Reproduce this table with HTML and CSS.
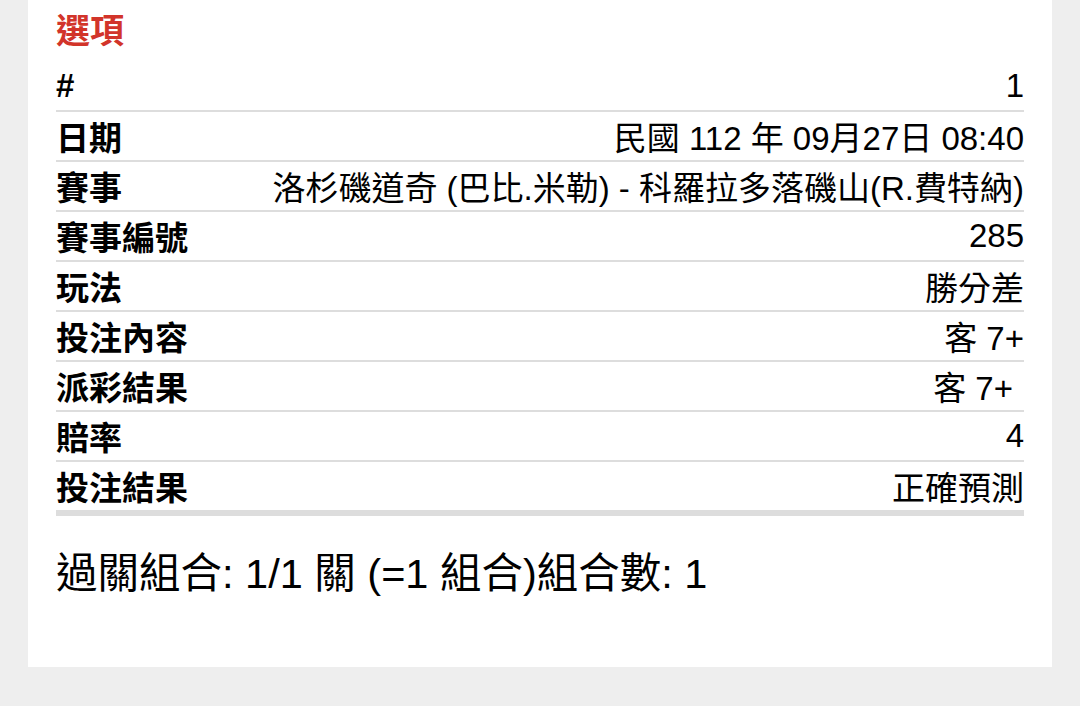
FILE: index.html
```html
<!DOCTYPE html>
<html lang="zh-Hant">
<head>
<meta charset="utf-8">
<link rel="stylesheet" href="styles.css">
</head>
<body>
<div class="card">
  <h2 class="title">選項</h2>
  <div class="list">
    <div class="row"><span class="label">#</span><span class="value">1</span></div>
    <div class="row"><span class="label">日期</span><span class="value">民國 112 年 09月27日 08:40</span></div>
    <div class="row"><span class="label">賽事</span><span class="value">洛杉磯道奇 (巴比.米勒) - 科羅拉多落磯山(R.費特納)</span></div>
    <div class="row"><span class="label">賽事編號</span><span class="value">285</span></div>
    <div class="row"><span class="label">玩法</span><span class="value">勝分差</span></div>
    <div class="row"><span class="label">投注內容</span><span class="value">客 7+</span></div>
    <div class="row"><span class="label">派彩結果</span><span class="value pad">客 7+</span></div>
    <div class="row"><span class="label">賠率</span><span class="value">4</span></div>
    <div class="row last"><span class="label">投注結果</span><span class="value">正確預測</span></div>
  </div>
  <p class="summary">過關組合: 1/1 關 (=1 組合)組合數: 1</p>
</div>
</body>
</html>
```

FILE: styles.css
```css
html, body {
  margin: 0;
  padding: 0;
  background: #eeeeee;
}
body {
  font-family: "Liberation Sans", "Noto Sans CJK TC", sans-serif;
  color: #000;
}
.card {
  margin: 0 28px;
  background: #ffffff;
  padding: 0 28px 69px;
}
.title {
  margin: 0;
  height: 62px;
  line-height: 62px;
  font-size: 34px;
  font-weight: bold;
  color: #d2342a;
}
.list {
  display: flex;
  flex-direction: column;
}
.row {
  display: flex;
  justify-content: space-between;
  align-items: center;
  height: 48px;
  border-bottom: 2px solid #dddddd;
  font-size: 33px;
}
.row.last {
  border-bottom: 6px solid #dddddd;
}
.label {
  font-weight: bold;
}
.value {
  font-weight: normal;
}
.value.pad {
  padding-right: 11px;
}
.summary {
  margin: 34px 0 0;
  font-size: 41.5px;
  line-height: 48px;
}
```
